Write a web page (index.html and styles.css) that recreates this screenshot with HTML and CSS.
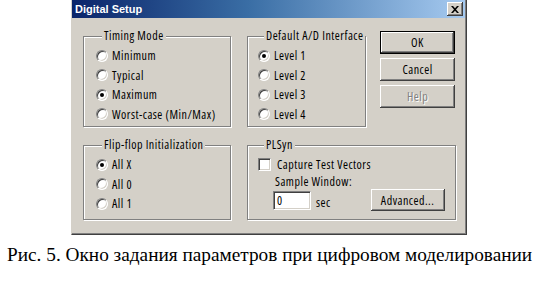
FILE: index.html
```html
<!DOCTYPE html>
<html lang="ru">
<head>
    <meta charset="UTF-8">
    <title>Digital Setup</title>
    <link rel="stylesheet" href="styles.css">
</head>
<body>
    <div class="window">
        <div class="titlebar">
            <span class="title">Digital Setup</span>
            <span class="close-btn">
                <svg width="8" height="7" viewBox="0 0 8 7">
                    <path d="M0 0h2l2 2.2L6 0h2L5 3.5 8 7H6L4 4.8 2 7H0l3-3.5z" fill="#000"/>
                </svg>
            </span>
        </div>

        <div class="content">
            <div class="row">
                <fieldset class="group timing">
                    <legend>Timing Mode</legend>
                    <div class="radio"><span class="radio-box"></span>Minimum</div>
                    <div class="radio"><span class="radio-box"></span>Typical</div>
                    <div class="radio"><span class="radio-box checked"></span>Maximum</div>
                    <div class="radio"><span class="radio-box"></span>Worst-case (Min/Max)</div>
                </fieldset>

                <fieldset class="group interface">
                    <legend>Default A/D Interface</legend>
                    <div class="radio"><span class="radio-box checked"></span>Level 1</div>
                    <div class="radio"><span class="radio-box"></span>Level 2</div>
                    <div class="radio"><span class="radio-box"></span>Level 3</div>
                    <div class="radio"><span class="radio-box"></span>Level 4</div>
                </fieldset>

                <div class="buttons">
                    <div class="btn default"><span>OK</span></div>
                    <div class="btn">Cancel</div>
                    <div class="btn disabled">Help</div>
                </div>
            </div>

            <div class="row bottom-row">
                <fieldset class="group flipflop">
                    <legend>Flip-flop Initialization</legend>
                    <div class="radio"><span class="radio-box checked"></span>All X</div>
                    <div class="radio"><span class="radio-box"></span>All 0</div>
                    <div class="radio"><span class="radio-box"></span>All 1</div>
                </fieldset>

                <fieldset class="group plsyn">
                    <legend>PLSyn</legend>
                    <div class="check"><span class="check-box"></span>Capture Test Vectors</div>
                    <div class="sample-label">Sample Window:</div>
                    <div class="sample-row">
                        <span class="field">0</span>
                        <span class="unit">sec</span>
                        <div class="btn advanced">Advanced...</div>
                    </div>
                </fieldset>
            </div>
        </div>
    </div>

    <p class="caption">Рис. 5. Окно задания параметров при цифровом моделировании</p>
</body>
</html>
```

FILE: styles.css
```css
body {
    margin: 0;
    background: #fff;
    font-family: "Open Sans", "Liberation Sans", Arial, sans-serif;
    font-stretch: 75%;
    font-weight: 400;
    font-size: 12px;
    letter-spacing: 0.5px;
    color: #000;
}

.window {
    width: 394px;
    height: 234px;
    margin-left: 71px;
    background: #d4d0c8;
    border-left: 1px solid #d4d0c8;
    border-right: 1px solid #404040;
    border-bottom: 1px solid #404040;
    box-shadow: inset -1px -1px 0 #808080;
}

.titlebar {
    height: 18px;
    margin-right: 1px;
    padding: 0 2px 0 3px;
    display: flex;
    align-items: center;
    justify-content: space-between;
    background: linear-gradient(to right, #0a246a, #3a6ea5 45%, #a6caf0);
}

.title {
    color: #fff;
    font-family: "Liberation Sans", Arial, sans-serif;
    font-stretch: normal;
    font-weight: bold;
    font-size: 11px;
    letter-spacing: 0;
}

.close-btn {
    width: 16px;
    height: 14px;
    box-sizing: border-box;
    display: flex;
    align-items: center;
    justify-content: center;
    background: #d4d0c8;
    box-shadow: inset -1px -1px 0 #404040, inset 1px 1px 0 #fff, inset -2px -2px 0 #808080;
}

.content {
    padding: 11px 0 0 11px;
}

.row {
    display: flex;
    align-items: flex-start;
}

.bottom-row {
    margin-top: 11px;
}

/* etched group boxes */
.group {
    box-sizing: border-box;
    flex: none;
    min-width: 0;
    margin: 0;
    padding: 0;
    border: 1px solid #808080;
    box-shadow: 1px 1px 0 #fff, inset 1px 1px 0 #fff;
}

.group legend {
    margin-left: 6px;
    padding: 0 2px 0 2px;
    height: 14px;
    line-height: 14px;
    white-space: nowrap;
    background: #d4d0c8;
}

.timing {
    width: 148px;
    height: 98px;
    padding: 3px 0 0 12px;
}

.interface {
    width: 119px;
    height: 98px;
    margin-left: 16px;
    padding: 3px 0 0 10px;
}

.flipflop {
    width: 148px;
    height: 82px;
    padding: 3px 0 0 12px;
}

.plsyn {
    width: 209px;
    height: 82px;
    margin-left: 16px;
    padding: 2px 0 0 10px;
}

.radio {
    height: 19.5px;
    display: flex;
    align-items: center;
    white-space: nowrap;
}

.radio-box {
    width: 12px;
    height: 12px;
    box-sizing: border-box;
    margin-right: 4px;
    border-radius: 50%;
    border: 1px solid;
    border-color: #808080 #fff #fff #808080;
    background: #fff;
    box-shadow: inset 1px 1px 0 #404040, inset -1px -1px 0 #d4d0c8;
    display: flex;
    align-items: center;
    justify-content: center;
}

.radio-box.checked::after {
    content: "";
    width: 4px;
    height: 4px;
    border-radius: 50%;
    background: #000;
}

.check {
    height: 20px;
    display: flex;
    align-items: center;
}

.check-box {
    width: 13px;
    height: 13px;
    box-sizing: border-box;
    margin-right: 6px;
    border: 1px solid;
    border-color: #808080 #fff #fff #808080;
    background: #fff;
    box-shadow: inset 1px 1px 0 #404040, inset -1px -1px 0 #d4d0c8;
}

.sample-label {
    margin: 0 0 0 17px;
    height: 16px;
    line-height: 16px;
}

.sample-row {
    display: flex;
    align-items: flex-start;
    margin-left: 15px;
}

.field {
    width: 38px;
    height: 19px;
    box-sizing: border-box;
    margin-top: 1px;
    padding: 0 0 0 3px;
    line-height: 17px;
    border: 1px solid;
    border-color: #808080 #fff #fff #808080;
    background: #fff;
    box-shadow: inset 1px 1px 0 #404040, inset -1px -1px 0 #d4d0c8;
}

.unit {
    margin: 4px 0 0 5px;
}

/* push buttons */
.buttons {
    flex: none;
    margin-left: 14px;
    margin-top: 2px;
    display: flex;
    flex-direction: column;
    gap: 4px;
}

.btn {
    width: 75px;
    height: 23px;
    box-sizing: border-box;
    display: flex;
    align-items: center;
    justify-content: center;
    background: #d4d0c8;
    box-shadow: inset -1px -1px 0 #404040, inset 1px 1px 0 #fff, inset -2px -2px 0 #808080;
}

.btn.default {
    border: 1px solid #000;
    box-shadow: none;
}

.btn.default span {
    display: flex;
    align-items: center;
    justify-content: center;
    width: 100%;
    height: 100%;
    box-shadow: inset -1px -1px 0 #404040, inset 1px 1px 0 #fff, inset -2px -2px 0 #808080;
}

.btn.disabled {
    color: #808080;
    text-shadow: 1px 1px 0 #fff;
}

.advanced {
    width: 74px;
    height: 22px;
    margin-left: 40px;
    margin-top: -1px;
}

.caption {
    margin: 9px 0 0 7px;
    font-family: "Liberation Serif", "Times New Roman", serif;
    font-stretch: normal;
    font-weight: normal;
    font-size: 19.3px;
    letter-spacing: 0;
    white-space: nowrap;
}
```
